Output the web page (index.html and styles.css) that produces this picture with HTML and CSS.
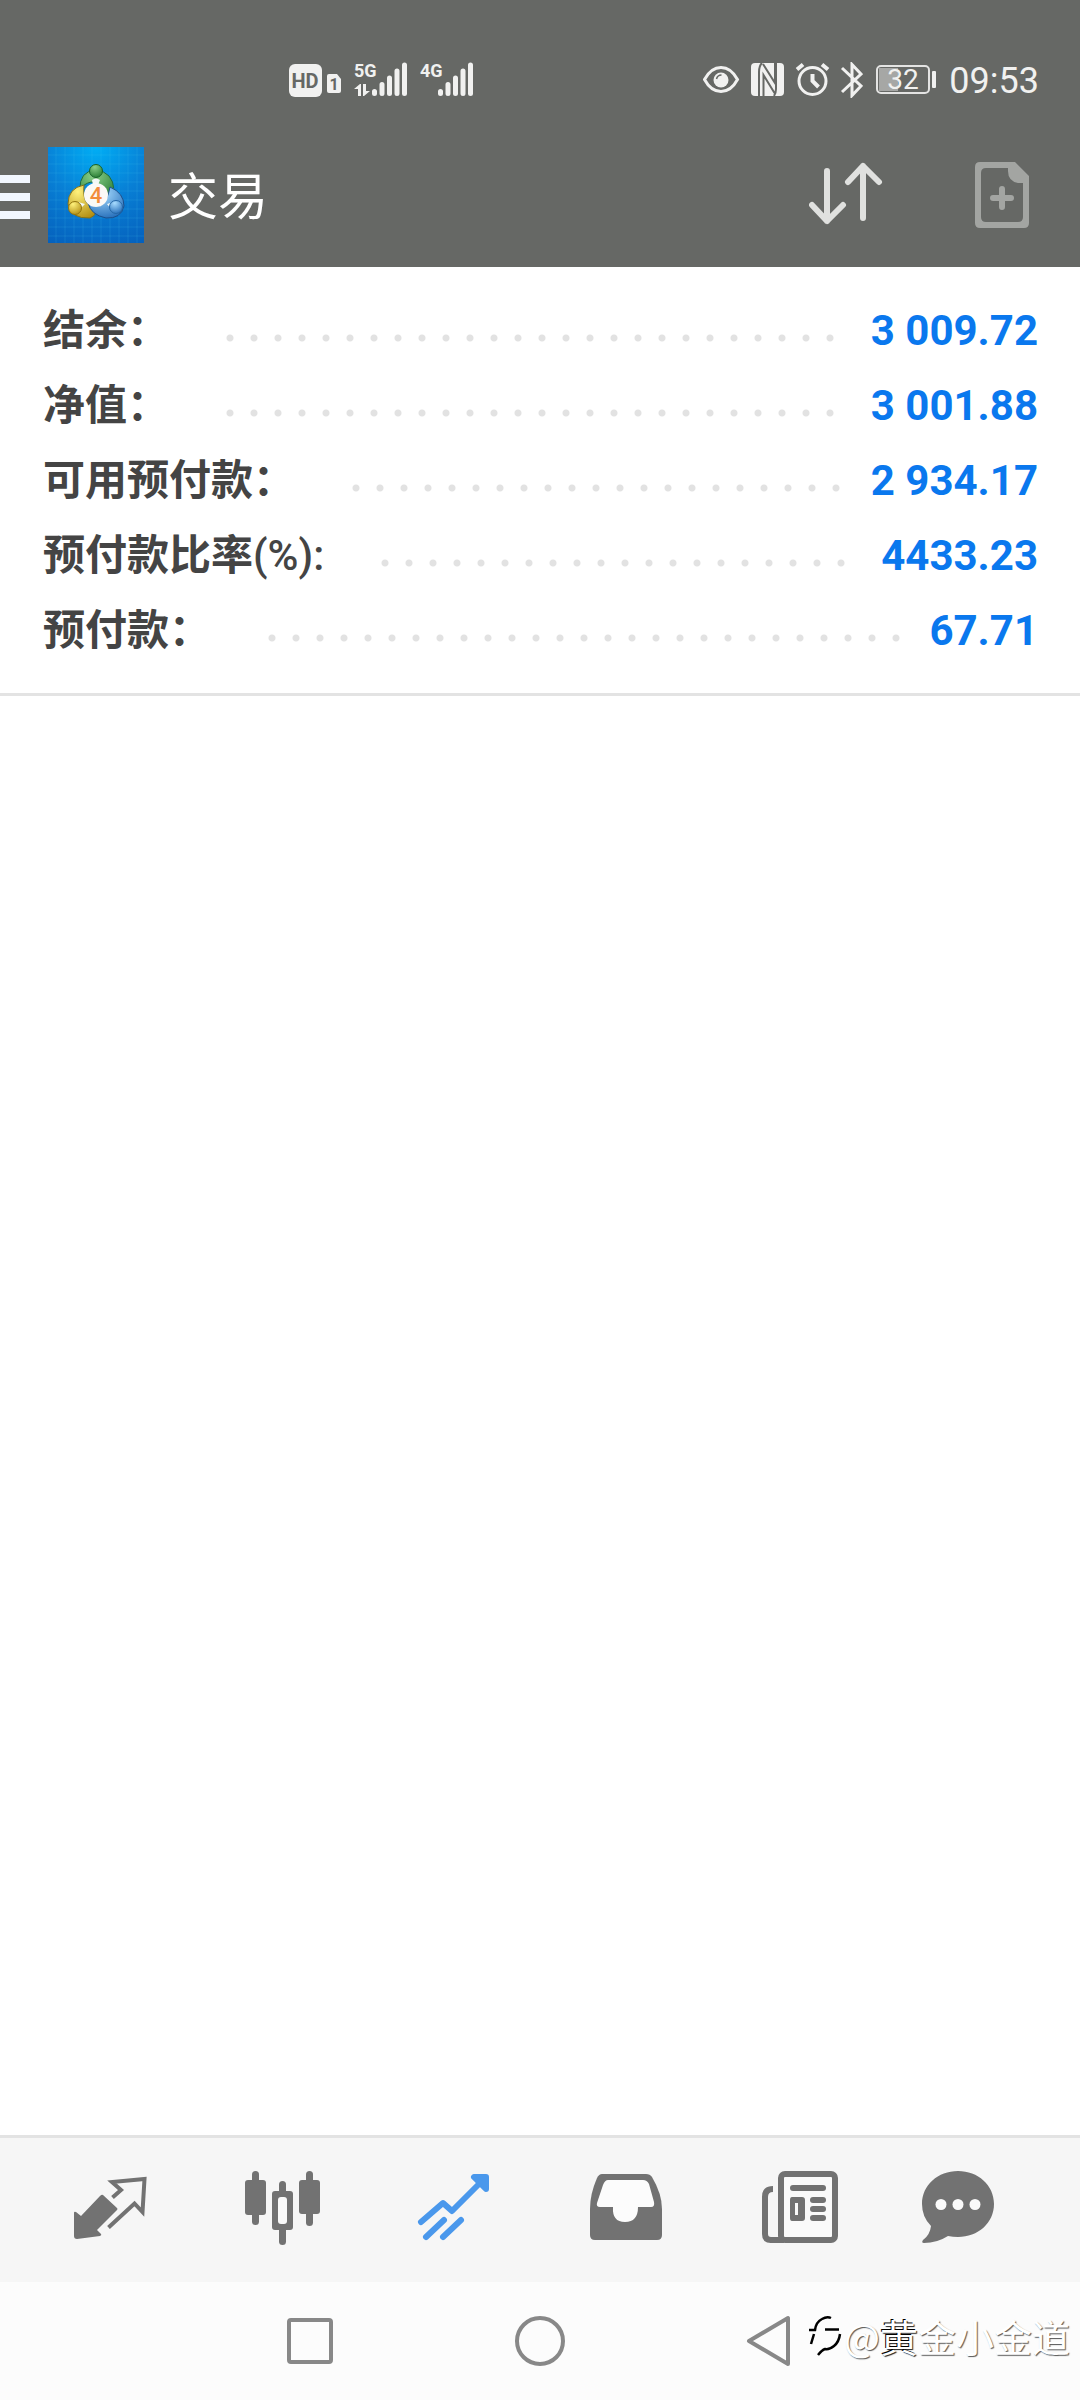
FILE: index.html
```html
<!DOCTYPE html>
<html lang="zh-CN">
<head>
<meta charset="utf-8">
<meta name="viewport" content="width=device-width, initial-scale=1">
<title>交易</title>
<link rel="stylesheet" href="styles.css">
</head>
<body>
<div class="app">
  <header class="header">
    <div class="status">
      <div class="status-group status-left">
        <svg class="icon" width="54" height="44" viewBox="288 58 54 44" aria-hidden="true">
          <rect x="289" y="64" width="33" height="33" rx="6" fill="#f1f1f0"/>
          <text class="hd-text" x="305" y="88" text-anchor="middle">HD</text>
          <path d="M329 74h8l4 5v12q0 2-2 2h-10q-2 0-2-2v-15q0-2 2-2z" fill="#f1f1f0"/>
          <text class="sim-text" x="334" y="90" text-anchor="middle">1</text>
        </svg>
        <svg class="icon" width="54" height="44" viewBox="355 58 54 44" aria-hidden="true">
          <text class="net-text" x="355" y="77">5G</text>
          <path d="M355 89l6-5h1v12h-3v-7zM364 84h3v7h4l-6 5h-1z" fill="#f1f1f0"/>
          <g class="bars"><path d="M375.500 91.500v2M383 84.500v9M390.500 78v15.500M398 71v22.500M405.500 65v28.500"/></g>
        </svg>
        <svg class="icon" width="54" height="44" viewBox="420 58 54 44" aria-hidden="true">
          <text class="net-text" x="420" y="77">4G</text>
          <g class="bars"><path d="M440.500 91.500v2M448 84.500v9M455.500 78v15.500M463 71v22.500M470.500 65v28.500"/></g>
        </svg>
      </div>
      <div class="status-group status-right">
        <svg class="icon" width="160" height="36" viewBox="703 62 160 36" aria-hidden="true">
          <g fill="none" stroke="#f1f1f0" stroke-width="3">
            <path d="M704.500 79.500Q711 67.500 721 67.500T737.500 79.500Q731 91.500 721 91.500T704.500 79.500z"/>
            <circle cx="812.500" cy="81" r="13.500"/>
            <path d="M812.500 74v7l6 6" stroke-width="4"/>
            <path d="M797 69.500l6-5M828 69.500l-6-5" stroke-width="4"/>
            <path d="M842 68l19 18-9 9.500v-31l9 9.500-19 18"/>
          </g>
          <circle cx="721" cy="80" r="7.500" fill="#f1f1f0"/>
          <path d="M716.500 79q1-4 5-4" fill="none" stroke="#666865" stroke-width="1.500"/>
          <rect x="751" y="63" width="33" height="33" rx="4" fill="#f1f1f0"/>
          <path d="M759 96V72q0-6 3-9M763 64l12 19V63M763.500 96V75l11 18M776 63v26q0 4-2 7" fill="none" stroke="#666865" stroke-width="2"/>
        </svg>
        <svg class="icon" width="62" height="36" viewBox="877 62 62 36" role="img" aria-label="电量">
          <rect x="881" y="68" width="19" height="23" fill="#a6a7a5"/>
          <rect x="879" y="66" width="52" height="27" rx="4" fill="none" stroke="#e4e4e3" stroke-width="2"/>
          <rect x="934" y="71" width="4" height="17" rx="1" fill="#f1f1f0"/>
          <text class="battery-text" x="905" y="89" text-anchor="middle">32</text>
        </svg>
        <time class="clock">09:53</time>
      </div>
    </div>
    <div class="toolbar">
      <button class="plain menu" aria-label="菜单"><span></span><span></span><span></span></button>
      <svg class="logo" width="96" height="96" viewBox="0 0 96 96" aria-hidden="true">
        <defs>
          <radialGradient id="sky" cx=".5" cy="0" r="1.100"><stop offset="0" stop-color="#00aef5"/><stop offset=".5" stop-color="#087fd5"/><stop offset="1" stop-color="#0561bd"/></radialGradient>
          <radialGradient id="green" cx=".4" cy=".2" r=".9"><stop offset="0" stop-color="#8bd08a"/><stop offset="1" stop-color="#21772c"/></radialGradient>
          <radialGradient id="gold" cx=".35" cy=".2" r=".9"><stop offset="0" stop-color="#fff27c"/><stop offset="1" stop-color="#b08b10"/></radialGradient>
          <radialGradient id="blue" cx=".4" cy=".2" r=".9"><stop offset="0" stop-color="#a8dcff"/><stop offset="1" stop-color="#1d67b5"/></radialGradient>
        </defs>
        <rect width="96" height="96" fill="url(#sky)"/>
        <path d="M8 0v96M17 0v96M26 0v96M35 0v96M44 0v96M53 0v96M62 0v96M71 0v96M80 0v96M89 0v96M0 8h96M0 17h96M0 26h96M0 35h96M0 44h96M0 53h96M0 62h96M0 71h96M0 80h96M0 89h96" stroke="#4bc4f2" stroke-opacity=".16"/>
        <g stroke-width="1">
          <path d="M32 43Q31 24 48 23Q65 25 66 43Q64 54 57 53Q55 36 43 35Q35 37 32 43z" fill="url(#green)" stroke="#1d6b43"/>
          <path d="M36 38Q20 41 20 57Q23 72 42 71Q51 67 47 59Q34 60 36 38z" fill="url(#gold)" stroke="#82711b"/>
          <path d="M62 40Q76 46 76 59Q73 72 58 71Q43 68 40 56Q57 67 62 40z" fill="url(#blue)" stroke="#1c4f8a"/>
          <path d="M44 33q4-3 8 0l-2 5h-5zM30 55l7 2-5 5zM66 55l-7 2 4 5z" fill="#f2f8f6" stroke="none"/>
          <circle cx="48" cy="24" r="6.500" fill="url(#green)" stroke="#176228"/>
          <circle cx="27" cy="61" r="6.500" fill="url(#gold)" stroke="#93750d"/>
          <circle cx="68" cy="60" r="6.500" fill="url(#blue)" stroke="#2467a7"/>
        </g>
        <circle cx="48" cy="48" r="12" fill="#fbf9f6"/>
        <text class="logo-text" x="48" y="56" text-anchor="middle">4</text>
      </svg>
      <h1 class="title">交易</h1>
      <button class="plain sort" aria-label="排序">
        <svg class="icon" width="74" height="66" viewBox="0 0 74 66" fill="none" stroke="#e0e1df" stroke-width="6" stroke-linecap="round" stroke-linejoin="round"><path d="M18 9v50M3 43l15 16 16-16M54 56V4M39 20L54 4l16 16"/></svg>
      </button>
      <button class="plain" aria-label="新订单">
        <svg class="icon" width="54" height="66" viewBox="0 0 54 66"><path fill="#a3a5a2" fill-rule="evenodd" d="M5 0H40L54 14V61q0 5-5 5H5q-5 0-5-5V5Q0 0 5 0zM11 6Q6 6 6 11V55q0 5 5 5H43q5 0 5-5V21H43Q33 19 33 9V6z"/><path d="M18 36h18M27 27v18" stroke="#a3a5a2" stroke-width="6" stroke-linecap="round"/></svg>
      </button>
    </div>
  </header>

  <main class="content">
    <dl class="account">
      <div class="row"><dt>结余：</dt><dd>3 009.72</dd></div>
      <div class="row"><dt>净值：</dt><dd>3 001.88</dd></div>
      <div class="row"><dt>可用预付款：</dt><dd>2 934.17</dd></div>
      <div class="row"><dt>预付款比率<span class="unit">(%):</span></dt><dd>4433.23</dd></div>
      <div class="row"><dt>预付款：</dt><dd>67.71</dd></div>
    </dl>
  </main>

  <nav class="tabs" aria-label="主导航">
    <button class="plain tab" aria-label="行情">
      <svg class="icon" width="80" height="80" viewBox="70 2165 80 80"><path d="M103 2195l14 13q1 1 0 2l-20 20 4 4q1 1-1 2l-23 3q-3 0-3-3v-23q0-2 2-1l5 4 19-20q2-2 3-1z" fill="#727272"/><path d="M112.500 2197.500l8.500-7.500-9-8 32.500-3-2 33-8-8.500-26 24" fill="none" stroke="#727272" stroke-width="4"/></svg>
    </button>
    <button class="plain tab" aria-label="图表">
      <svg class="icon" width="80" height="80" viewBox="241 2165 80 80"><g fill="#727272"><rect x="251" y="2171" width="7" height="54" rx="3.500"/><rect x="244" y="2180" width="21" height="35" rx="3"/><rect x="305" y="2171" width="7" height="55" rx="3.500"/><rect x="298" y="2180" width="21" height="34" rx="3"/><rect x="278" y="2181" width="7" height="64" rx="3.500"/><rect x="271" y="2191" width="21" height="39" rx="3"/></g><rect x="277" y="2197" width="9" height="27" rx="3" fill="#f9f9f9"/></svg>
    </button>
    <button class="plain tab" aria-label="交易" aria-current="page">
      <svg class="icon" width="80" height="80" viewBox="414 2165 80 80" fill="none" stroke="#4a98ec" stroke-width="6" stroke-linecap="round"><path d="M421 2222l22-19 9 8 33-33" stroke-linejoin="round"/><path d="M474 2177h12v12z" fill="#4a98ec" stroke-linejoin="round"/><path d="M426 2237l18-17M443 2237l18-17"/></svg>
    </button>
    <button class="plain tab" aria-label="历史">
      <svg class="icon" width="80" height="80" viewBox="587 2165 80 80"><path fill="#727272" d="M603 2174h44q4 0 6 3 10 17 10 32v26q0 5-5 5h-62q-5 0-5-5v-26q0-15 7-31 2-4 5-4z"/><path fill="#fcfcfc" d="M609 2180h35q4 0 6 4l5 18q1 5-3 5h-13q0 15-13 15t-12-15h-13q-4 0-3-4l6-18q2-5 5-5z"/></svg>
    </button>
    <button class="plain tab" aria-label="新闻">
      <svg class="icon" width="80" height="80" viewBox="758 2165 80 80"><path d="M773 2189q-8 0-8 8v37q0 6 6 6h12" fill="none" stroke="#727272" stroke-width="6"/><rect x="781" y="2174" width="54" height="66" rx="4" fill="#fafafa" stroke="#727272" stroke-width="6"/><g fill="#727272"><path d="M768 2237h16v6h-14z"/><rect x="790" y="2185" width="36" height="6" rx="3"/><path fill-rule="evenodd" d="M792 2197h10q3 0 3 3v18q0 3-3 3h-10q-2 0-2-3v-18q0-3 2-3zm3 6v12h3v-12z"/><rect x="810" y="2197" width="16" height="6" rx="3"/><rect x="810" y="2206" width="16" height="6" rx="3"/><rect x="810" y="2215" width="16" height="6" rx="3"/></g></svg>
    </button>
    <button class="plain tab" aria-label="消息">
      <svg class="icon" width="104" height="80" viewBox="918 2165 104 80"><path fill="#727272" d="M958 2171c20 0 36 14 36 33s-16 33-36 33q-5 0-10-1-11 7-24 7-3 0-1-3 7-5 8-14-9-9-9-22c0-19 16-33 36-33z"/><g fill="#fafafa"><circle cx="941" cy="2204.500" r="5.500"/><circle cx="958" cy="2204.500" r="5.500"/><circle cx="975" cy="2204.500" r="5.500"/></g></svg>
    </button>
  </nav>

  <nav class="system" aria-label="系统导航">
    <button class="plain key" aria-label="最近任务"><svg class="icon" width="54" height="54" viewBox="0 0 54 54" fill="none" stroke="#888" stroke-width="4"><rect x="6" y="6" width="42" height="42" rx="2"/></svg></button>
    <button class="plain key" aria-label="主屏幕"><svg class="icon" width="54" height="54" viewBox="0 0 54 54" fill="none" stroke="#888" stroke-width="4"><circle cx="27" cy="27" r="23"/></svg></button>
    <button class="plain key" aria-label="返回"><svg class="icon" width="54" height="54" viewBox="0 0 54 54" fill="none" stroke="#888" stroke-width="4" stroke-linejoin="round"><path d="M45 4v46L6 27z"/></svg></button>
    <div class="watermark">
      <svg class="icon" width="36" height="42" viewBox="808 2322 36 42" fill="none" stroke="#000" stroke-width="2.500"><path d="M809 2337h6q1-8 7-11 5-3 9-1M814 2341l-3 10M825 2336.500h14M840 2341q-1 8-6 12t-9 3q-3 1-7 6"/></svg>
      <span>@<b class="dark">黄</b>金小金道</span>
    </div>
  </nav>
</div>
</body>
</html>
```
FILE: styles.css
```css
* {
  box-sizing: border-box;
}

body {
  margin: 0;
  background: #fff;
  font-family: Roboto, "Noto Sans CJK SC", sans-serif;
}

.app {
  display: flex;
  flex-direction: column;
  min-height: 100vh;
}

.plain {
  padding: 0;
  border: 0;
  background: none;
}

.icon {
  display: block;
  flex: none;
}

/* Header: phone status line and app toolbar */
.header {
  background: #666865;
  color: #fff;
}

.status {
  display: flex;
  justify-content: space-between;
  align-items: center;
  height: 124px;
  padding: 36px 41px 0 288px;
}

.status-group {
  display: flex;
  align-items: center;
}

.status-left {
  gap: 12px;
}

.status-right {
  gap: 12px;
}

.bars {
  fill: none;
  stroke: #f1f1f0;
  stroke-width: 5px;
  stroke-linecap: round;
}

.hd-text {
  fill: #666865;
  font-size: 20px;
  font-weight: 700;
}

.sim-text {
  fill: #666865;
  font-size: 16px;
  font-weight: 700;
}

.net-text {
  fill: #f1f1f0;
  font-size: 18px;
  font-weight: 700;
}

.battery-text {
  fill: #f1f1f0;
  font-size: 28px;
}

.clock {
  font-size: 36px;
  line-height: 44px;
  padding-top: 2px;
  color: #f1f1f0;
}

.toolbar {
  display: flex;
  align-items: center;
  height: 143px;
  padding: 0 51px 2px 0;
}

.menu {
  display: flex;
  flex-direction: column;
  gap: 10px;
  width: 30px;
  margin-right: 18px;
  padding-top: 4px;
}

.menu span {
  height: 8px;
  background: #f2f7ff;
}

.logo {
  flex: none;
}

.logo-text {
  fill: #f28c3c;
  font-size: 22px;
  font-weight: 500;
}

.title {
  flex: 1;
  margin: 0 0 0 24px;
  padding-top: 6px;
  font-size: 50px;
  font-weight: 400;
  line-height: 60px;
}

.sort {
  margin-right: 92px;
}

/* Account summary */
.content {
  flex: 1;
}

.account {
  margin: 0;
  padding: 26px 42px 25px 43px;
  border-bottom: 3px solid #e3e3e3;
}

.row {
  display: flex;
  align-items: center;
  height: 75px;
  font-size: 42px;
  line-height: 50px;
}

.row dt {
  color: #444;
  font-weight: 700;
}

.unit {
  font-weight: 500;
}

.row::after {
  content: "";
  order: 1;
  flex: 1;
  height: 8px;
  margin: 14px 26px 0 57px;
  background: radial-gradient(circle at 4px 4px, #e2e2e2 3px, transparent 4px) 0 0 / 24px 8px;
}

.row dd {
  order: 2;
  margin: 0;
  color: #0a78ee;
  font-weight: 700;
}

/* Bottom tabs */
.tabs {
  display: flex;
  height: 147px;
  padding: 0 24px;
  border-top: 3px solid #e3e3e3;
  background: #f6f6f6;
}

.tab {
  display: flex;
  flex: 1;
  align-items: center;
  justify-content: center;
  padding-bottom: 10px;
}

/* System keys */
.system {
  position: relative;
  display: flex;
  justify-content: center;
  height: 118px;
  background: #fcfcfc;
}

.key {
  display: flex;
  align-items: center;
  justify-content: center;
  width: 230px;
}

.watermark {
  position: absolute;
  right: 10px;
  bottom: 36px;
  display: flex;
  align-items: center;
  color: #fff;
  font-family: "Noto Sans CJK SC", sans-serif;
  font-size: 38px;
  line-height: 56px;
  text-shadow: 1px 1px 1px #555;
}

.dark {
  font-weight: 400;
  text-shadow: -1px -1px 0 #000, 1px 1px 1px #222;
}
```
